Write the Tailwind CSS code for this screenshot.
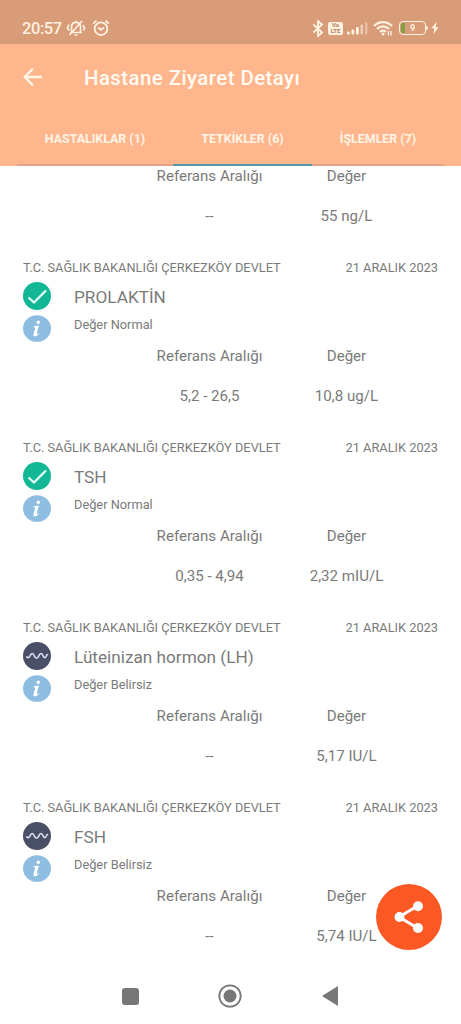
<!DOCTYPE html>
<html lang="tr">
<head>
    <meta charset="UTF-8">
    <title>Hastane Ziyaret Detayı</title>
    <script src="https://cdn.jsdelivr.net/npm/@tailwindcss/browser@4"></script>
    <style>
        body { font-family: Roboto, sans-serif; }
    </style>
</head>
<body class="bg-white text-[#7a7a7a]">

    <!-- Icons -->
    <svg class="hidden">
        <symbol id="icon-check" viewBox="0 0 28 28">
            <circle cx="14" cy="14" r="14" fill="#12b896"/>
            <path d="M5.500 15.500l5.500 5L23 8.500" fill="none" stroke="#e4fff8" stroke-width="2.300"/>
        </symbol>
        <symbol id="icon-wave" viewBox="0 0 28 28">
            <circle cx="14" cy="14" r="14" fill="#4a4f68"/>
            <path d="M3.300 14.300c1.200 2 2.500 1.700 3.700-.5 1.400-3 3-3 4.300 0 1.500 3.200 3 3.200 4.500 0 1.400-3 3-3 4.300 0 1.200 2.500 2.300 2.400 3.300.2.600-1.400 1-1.700 1.500-1" fill="none" stroke="#dfe2f2" stroke-width="1.600"/>
        </symbol>
        <symbol id="icon-info" viewBox="0 0 28 27">
            <ellipse cx="14" cy="13.500" rx="14" ry="13.300" fill="#8dbde1"/>
            <circle cx="15.300" cy="7.300" r="1.700" fill="#fff"/>
            <path d="M10.700 11.300l5.200-.9-2.200 8.300c-.2.900.4.900 1.700-.6l.6.500c-1.500 2.200-2.800 2.800-4 2.800-1.500 0-1.900-1-1.500-2.300l1.500-5.700c.2-.8-.2-1.100-1.300-1.100z" fill="#fff"/>
        </symbol>
    </svg>

    <div class="relative flex h-[1024px] w-[461px] flex-col overflow-hidden">

        <!-- Status bar -->
        <div class="flex h-11 shrink-0 items-end justify-between bg-[#d89c79] pr-[22px] pb-[7px] pl-[22px] text-[#fff0df]">
            <div class="flex h-[18px] items-center">
                <span class="w-[41px] pt-[2px] text-[16.5px] leading-[18px] font-medium tracking-tight whitespace-nowrap">20:57</span>
                <svg class="ml-[3px] h-[18px] w-5" viewBox="0 0 20 18" fill="none" stroke="currentColor" stroke-width="1.700">
                    <path d="M5.500 13.200V8c0-3 2-4.700 4.500-4.700S14.500 5 14.500 8v5.200M4 13.500h12M8.500 16h3M10 3.300V1.800M3 5.500L1.500 9 3 11.500M17 6l1.500 3-1 2.500M3.500 16L16 2"/>
                </svg>
                <svg class="ml-[6px] h-[18px] w-[18px]" viewBox="0 0 18 18" fill="none" stroke="currentColor" stroke-width="1.800">
                    <circle cx="9" cy="9.700" r="6.300"/>
                    <path d="M1.200 4.700l3.300-3M16.800 4.700l-3.300-3M6 8.500l3 2.300 3-2.300"/>
                </svg>
            </div>
            <div class="flex h-[18px] items-center">
                <svg class="h-[17px] w-3" viewBox="0 0 12 17" fill="none" stroke="currentColor" stroke-width="1.900">
                    <path d="M1.500 4.500l8.500 8-4 3.500V1l4 3.500-8.500 8"/>
                </svg>
                <div class="ml-1 flex h-[13px] w-[15px] flex-col items-center justify-center rounded-[2px] bg-[#fff0df]">
                    <span class="text-[6px] leading-[6px] font-bold text-[#b97b58]">Vo</span>
                    <span class="text-[6px] leading-[6px] font-bold text-[#b97b58]">LTE</span>
                </div>
                <svg class="ml-1 h-[14px] w-[21px]" viewBox="0 0 21 14" fill="currentColor">
                    <rect x="0" y="10.500" width="2.800" height="3" rx="1"/>
                    <rect x="4.500" y="8.500" width="2.800" height="5" rx="1"/>
                    <rect x="9" y="6" width="2.800" height="7.500" rx="1"/>
                    <rect x="13.500" y="3.500" width="2.500" height="10" rx="1" opacity=".6"/>
                    <rect x="18" y="1" width="2.500" height="12.500" rx="1" opacity=".4"/>
                </svg>
                <svg class="ml-[5px] h-4 w-5" viewBox="0 0 20 16" fill="none" stroke="currentColor" stroke-width="2.200">
                    <path d="M1 6c5-5.300 13-5.300 18 0M4 9c3.500-3.500 8.500-3.500 12 0M7 11.800c2-1.600 4-1.600 6 0"/>
                    <circle cx="10" cy="14" r="1.500" fill="currentColor" stroke="none"/>
                    <path d="M15.500 11v4.500M18 11v4.500" stroke-width="1.300"/>
                </svg>
                <div class="ml-[6px] flex h-[14px] w-[27px] items-center rounded-[4px] border-[1.5px] border-current p-px">
                    <span class="h-full w-1 rounded-l-[2px] bg-[#84a147]"></span>
                    <span class="flex-1 pr-1 text-center text-[9px] leading-[10px] font-bold">9</span>
                </div>
                <span class="h-1 w-[2px] rounded-r bg-current"></span>
                <svg class="ml-[3px] h-3 w-2" viewBox="0 0 8 12" fill="currentColor">
                    <path d="M5.500 0L.3 6.300h3L2.500 12l5.200-6.800h-3z"/>
                </svg>
            </div>
        </div>

        <!-- App bar -->
        <header class="flex h-[122px] shrink-0 flex-col bg-[#ffb68c] text-white">
            <div class="flex h-[66px] items-center pl-[23px]">
                <svg class="h-5 w-5 text-[#fff6e8]" viewBox="0 0 20 20" fill="none" stroke="currentColor" stroke-width="2.300">
                    <path d="M19 10H2M10 1.500L1.700 10l8.300 8.500"/>
                </svg>
                <h1 class="ml-[41px] pt-px text-[20.4px] leading-6 font-medium tracking-[0.45px] whitespace-nowrap text-[#fffaf2]">Hastane Ziyaret Detayı</h1>
            </div>
            <nav class="flex h-14 pr-[17px] pl-[17px] text-center text-[12.4px] font-bold whitespace-nowrap text-[#fff4e6]">
                <a class="w-[156px] border-b-2 border-[#e3a487] pt-[19px] leading-5">HASTALIKLAR (1)</a>
                <a class="w-[139px] border-b-2 border-[#4f9aae] pt-[19px] leading-5">TETKİKLER (6)</a>
                <a class="w-[132px] border-b-2 border-[#e3a487] pt-[19px] leading-5">İŞLEMLER (7)</a>
            </nav>
        </header>

        <!-- Test results -->
        <main class="flex-1">
            <div class="grid h-[91px] grid-cols-[137px_137px] grid-rows-[20px_20px] gap-y-5 pl-[141px] text-center text-[15.1px] leading-5">
                <span>Referans Aralığı</span>
                <span>Değer</span>
                <span>--</span>
                <span>55 ng/L</span>
            </div>

            <section class="h-[180px]">
                <div class="flex h-5 justify-between pt-px pr-[23px] pl-[23px] text-[12.8px] leading-5">
                    <span>T.C. SAĞLIK BAKANLIĞI ÇERKEZKÖY DEVLET</span>
                    <span>21 ARALIK 2023</span>
                </div>
                <div class="flex h-[69px] pt-[5px] pl-[23px]">
                    <div class="flex w-7 flex-col gap-[5px]">
                        <svg class="h-7 w-7"><use href="#icon-check"/></svg>
                        <svg class="h-[27px] w-7"><use href="#icon-info"/></svg>
                    </div>
                    <div class="ml-[23px]">
                        <h2 class="mt-[3px] text-[17.2px] leading-6">PROLAKTİN</h2>
                        <p class="mt-[6px] text-[12.8px] leading-5">Değer Normal</p>
                    </div>
                </div>
                <div class="grid grid-cols-[137px_137px] gap-y-5 pl-[141px] text-center text-[15.1px] leading-5">
                    <span>Referans Aralığı</span>
                    <span>Değer</span>
                    <span>5,2 - 26,5</span>
                    <span>10,8 ug/L</span>
                </div>
            </section>

            <section class="h-[180px]">
                <div class="flex h-5 justify-between pt-px pr-[23px] pl-[23px] text-[12.8px] leading-5">
                    <span>T.C. SAĞLIK BAKANLIĞI ÇERKEZKÖY DEVLET</span>
                    <span>21 ARALIK 2023</span>
                </div>
                <div class="flex h-[69px] pt-[5px] pl-[23px]">
                    <div class="flex w-7 flex-col gap-[5px]">
                        <svg class="h-7 w-7"><use href="#icon-check"/></svg>
                        <svg class="h-[27px] w-7"><use href="#icon-info"/></svg>
                    </div>
                    <div class="ml-[23px]">
                        <h2 class="mt-[3px] text-[17.2px] leading-6">TSH</h2>
                        <p class="mt-[6px] text-[12.8px] leading-5">Değer Normal</p>
                    </div>
                </div>
                <div class="grid grid-cols-[137px_137px] gap-y-5 pl-[141px] text-center text-[15.1px] leading-5">
                    <span>Referans Aralığı</span>
                    <span>Değer</span>
                    <span>0,35 - 4,94</span>
                    <span>2,32 mIU/L</span>
                </div>
            </section>

            <section class="h-[180px]">
                <div class="flex h-5 justify-between pt-px pr-[23px] pl-[23px] text-[12.8px] leading-5">
                    <span>T.C. SAĞLIK BAKANLIĞI ÇERKEZKÖY DEVLET</span>
                    <span>21 ARALIK 2023</span>
                </div>
                <div class="flex h-[69px] pt-[5px] pl-[23px]">
                    <div class="flex w-7 flex-col gap-[5px]">
                        <svg class="h-7 w-7"><use href="#icon-wave"/></svg>
                        <svg class="h-[27px] w-7"><use href="#icon-info"/></svg>
                    </div>
                    <div class="ml-[23px]">
                        <h2 class="mt-[3px] text-[17.2px] leading-6">Lüteinizan hormon (LH)</h2>
                        <p class="mt-[6px] text-[12.8px] leading-5">Değer Belirsiz</p>
                    </div>
                </div>
                <div class="grid grid-cols-[137px_137px] gap-y-5 pl-[141px] text-center text-[15.1px] leading-5">
                    <span>Referans Aralığı</span>
                    <span>Değer</span>
                    <span>--</span>
                    <span>5,17 IU/L</span>
                </div>
            </section>

            <section>
                <div class="flex h-5 justify-between pt-px pr-[23px] pl-[23px] text-[12.8px] leading-5">
                    <span>T.C. SAĞLIK BAKANLIĞI ÇERKEZKÖY DEVLET</span>
                    <span>21 ARALIK 2023</span>
                </div>
                <div class="flex h-[69px] pt-[5px] pl-[23px]">
                    <div class="flex w-7 flex-col gap-[5px]">
                        <svg class="h-7 w-7"><use href="#icon-wave"/></svg>
                        <svg class="h-[27px] w-7"><use href="#icon-info"/></svg>
                    </div>
                    <div class="ml-[23px]">
                        <h2 class="mt-[3px] text-[17.2px] leading-6">FSH</h2>
                        <p class="mt-[6px] text-[12.8px] leading-5">Değer Belirsiz</p>
                    </div>
                </div>
                <div class="grid grid-cols-[137px_137px] gap-y-5 pl-[141px] text-center text-[15.1px] leading-5">
                    <span>Referans Aralığı</span>
                    <span>Değer</span>
                    <span>--</span>
                    <span>5,74 IU/L</span>
                </div>
            </section>
        </main>

        <!-- Share button -->
        <button class="absolute right-[19px] bottom-[74px] flex h-[66px] w-[66px] items-center justify-center rounded-full bg-[#fc5823]">
            <svg class="h-8 w-[30px]" viewBox="0 0 30 32" fill="#fff">
                <path d="M23.500 5L5 16l18.500 11" fill="none" stroke="#fff" stroke-width="3"/>
                <circle cx="24" cy="5.300" r="5"/>
                <circle cx="5.500" cy="16" r="5"/>
                <circle cx="24" cy="27" r="5"/>
            </svg>
        </button>

        <!-- System navigation -->
        <footer class="flex h-14 shrink-0 items-center pl-[122px]">
            <div class="h-[17px] w-[17px] rounded-[3px] bg-[#777777]"></div>
            <svg class="ml-[79px] h-6 w-6" viewBox="0 0 24 24" fill="#777777">
                <circle cx="12" cy="12" r="10.700" fill="none" stroke="#777777" stroke-width="1.800"/>
                <circle cx="12" cy="12" r="6.500"/>
            </svg>
            <svg class="ml-[80px] h-5 w-4" viewBox="0 0 16 20" fill="#777777">
                <path d="M0 10L16 0v20z"/>
            </svg>
        </footer>
    </div>

</body>
</html>
